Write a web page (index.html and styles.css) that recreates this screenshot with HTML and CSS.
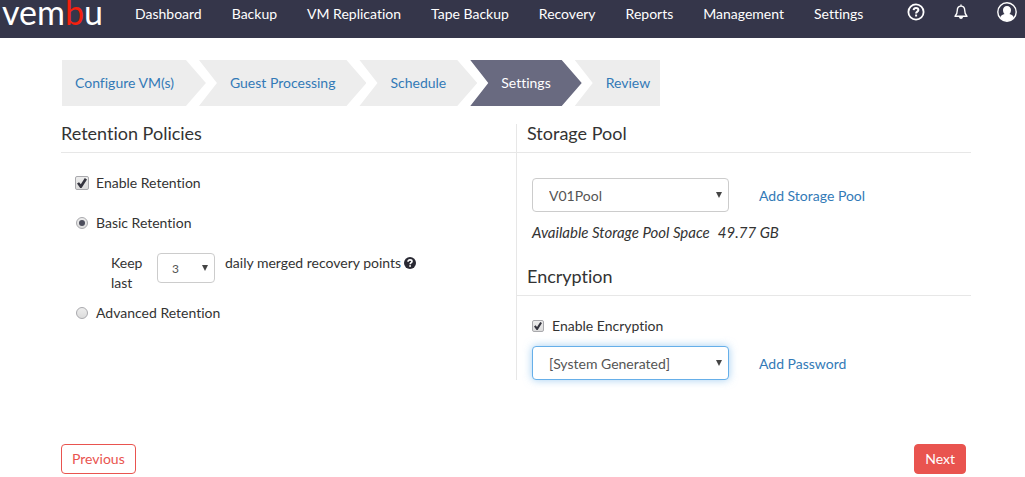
FILE: index.html
```html
<!DOCTYPE html>
<html lang="en">
<head>
  <meta charset="UTF-8" />
  <meta name="viewport" content="width=device-width, initial-scale=1" />
  <title>Vembu - Backup Settings</title>
  <link rel="stylesheet" href="styles.css">
</head>
<body>

<header class="topbar">
  <a href="#" class="logo">vem<span class="logo-accent">b</span>u</a>
  <nav class="main-nav">
    <a href="#">Dashboard</a>
    <a href="#">Backup</a>
    <a href="#">VM Replication</a>
    <a href="#">Tape Backup</a>
    <a href="#">Recovery</a>
    <a href="#">Reports</a>
    <a href="#">Management</a>
    <a href="#">Settings</a>
  </nav>
  <div class="top-icons">
    <a href="#" aria-label="Help">
      <svg width="18" height="18" viewBox="0 0 18 18" fill="none" stroke="#fff" stroke-width="1.8">
        <circle cx="9" cy="9" r="7.6"/>
        <path d="M6.6 7.2C6.8 5.6 7.8 5 9 5c1.400 0 2.400.8 2.400 2 0 1.600-2.300 1.700-2.300 3.500" stroke-width="2"/>
        <path d="M8.100 12.500h2" stroke-width="2"/>
      </svg>
    </a>
    <a href="#" aria-label="Notifications">
      <svg width="14" height="16" viewBox="0 0 14 16" fill="none" stroke="#fff" stroke-width="1.400" stroke-linejoin="round">
        <path d="M7 .5v1.500M1 12.300c1.800-1.500 2.300-3.300 2.300-6C3.300 3.700 4.800 2.100 7 2.100s3.700 1.600 3.700 4.200c0 2.700.5 4.500 2.300 6z"/>
        <path d="M5.300 13a1.700 1.700 0 0 0 3.400 0z" fill="#fff" stroke-width=".6"/>
      </svg>
    </a>
    <a href="#" aria-label="Account">
      <svg width="20" height="20" viewBox="0 0 20 20">
        <circle cx="10" cy="10" r="9.200" fill="none" stroke="#fff" stroke-width="1.400"/>
        <path d="M10 4c2.500 0 4 1.700 4 4 0 1.900-.7 3.300-1.700 4.100 2.400.4 4 1.500 4.500 3.700A9 9 0 0 1 10 19a9 9 0 0 1-6.800-3.200c.5-2.200 2.100-3.300 4.500-3.700C6.700 11.300 6 9.900 6 8c0-2.300 1.500-4 4-4z" fill="#fff"/>
      </svg>
    </a>
  </div>
</header>

<main class="container">
  <nav class="steps">
    <a href="#" class="step">Configure VM(s)</a>
    <a href="#" class="step">Guest Processing</a>
    <a href="#" class="step">Schedule</a>
    <a href="#" class="step active">Settings</a>
    <a href="#" class="step">Review</a>
  </nav>

  <form id="settingsForm">
    <div class="columns">
      <section class="column">
        <h2>Retention Policies</h2>
        <div class="retention">
          <label class="option"><input type="checkbox" class="check" name="retention" checked>Enable Retention</label>
          <label class="option"><input type="radio" class="radio" name="policy" value="basic" checked>Basic Retention</label>
          <div class="keep-row">
            <label for="keepLast" class="keep-label">Keep last</label>
            <span class="select-box small">
              <select id="keepLast">
                <option>1</option>
                <option>2</option>
                <option selected>3</option>
              </select>
            </span>
            <span class="keep-text">daily merged recovery points
              <svg class="hint" width="12" height="12" viewBox="0 0 12 12">
                <circle cx="6" cy="6" r="6" fill="#292933"/>
                <path d="M4 4.700C4.100 3.400 4.900 2.900 6 2.900s2 .6 2 1.600c0 1.200-1.800 1.300-1.800 2.700M5.200 9h1.800" fill="none" stroke="#fff" stroke-width="1.600"/>
              </svg>
            </span>
          </div>
          <label class="option"><input type="radio" class="radio" name="policy" value="advanced">Advanced Retention</label>
        </div>
      </section>

      <section class="column right">
        <h2>Storage Pool</h2>
        <div class="pool">
          <div class="field-row">
            <span class="select-box">
              <select id="pool" aria-label="Storage Pool">
                <option>V01Pool</option>
              </select>
            </span>
            <a href="#">Add Storage Pool</a>
          </div>
          <div class="space"><span>Available Storage Pool Space</span><span>49.77 GB</span></div>
        </div>

        <h2>Encryption</h2>
        <div class="encryption">
          <label class="option"><input type="checkbox" class="check compact" name="encryption" checked>Enable Encryption</label>
          <div class="field-row">
            <span class="select-box focused">
              <select id="password" aria-label="Encryption password">
                <option>[System Generated]</option>
              </select>
            </span>
            <a href="#">Add Password</a>
          </div>
        </div>
      </section>
    </div>

    <div class="actions">
      <button type="button" class="btn btn-outline">Previous</button>
      <button type="submit" class="btn">Next</button>
    </div>
  </form>
</main>

</body>
</html>
```
FILE: styles.css
```css
* {
  box-sizing: border-box;
}

body {
  margin: 0;
  background: #fff;
  color: #333;
  font-family: Lato, "Liberation Sans", sans-serif;
  font-size: 14px;
  line-height: 20px;
  font-variant-ligatures: none;
}

a {
  color: #337ab7;
  text-decoration: none;
}

/* top bar */
.topbar {
  display: flex;
  align-items: flex-start;
  height: 38px;
  padding: 0 8px 0 2px;
  background: #35364a;
}

.logo {
  width: 102px;
  color: #fff;
  font-size: 34px;
  line-height: 24px;
}

.logo-accent {
  color: #f5200f;
}

.main-nav {
  display: flex;
  gap: 30px;
  margin-left: 31px;
  padding-top: 4px;
  white-space: nowrap;
}

.main-nav a {
  color: #fff;
}

.top-icons {
  display: flex;
  align-items: center;
  gap: 29px;
  margin-left: auto;
  padding-top: 2px;
}

.top-icons svg {
  display: block;
}

/* wizard steps */
.container {
  padding: 22px 54px 0 61px;
}

.steps {
  display: flex;
}

.step {
  margin-left: -7px;
  padding: 13px 31px;
  background: #ededed;
  clip-path: polygon(0 0, calc(100% - 20px) 0, 100% 50%, calc(100% - 20px) 100%, 0 100%, 18px 50%);
}

.step:first-child {
  margin-left: 1px;
  padding-left: 13px;
  padding-right: 32px;
  clip-path: polygon(0 0, calc(100% - 20px) 0, 100% 50%, calc(100% - 20px) 100%, 0 100%);
}

.step:last-child {
  padding-right: 10px;
  clip-path: polygon(0 0, 100% 0, 100% 100%, 0 100%, 18px 50%);
}

.step.active {
  background: #696a80;
  color: #fff;
}

/* settings columns */
.columns {
  display: grid;
  grid-template-columns: 1fr 1fr;
  margin-top: 18px;
}

.column.right {
  border-left: 1px solid #e7e7e7;
}

h2 {
  margin: 0;
  padding-bottom: 10px;
  border-bottom: 1px solid #e7e7e7;
  font-size: 18px;
  font-weight: normal;
  line-height: 18px;
}

.right h2 {
  padding-left: 10px;
}

.retention {
  display: flex;
  flex-direction: column;
  align-items: flex-start;
  padding: 20px 0 0 14px;
}

.option {
  display: flex;
  align-items: center;
}

.retention .option + .option {
  margin-top: 20px;
}

.keep-row {
  display: flex;
  margin: 20px 0 10px 36px;
}

.keep-label {
  width: 46px;
  padding-right: 10px;
}

.keep-text {
  margin-left: 10px;
}

.hint {
  margin-left: -1px;
  vertical-align: -1px;
}

.check,
.radio {
  flex: none;
  display: grid;
  place-items: center;
  appearance: none;
  width: 14px;
  height: 14px;
  margin: 0 7px 0 0;
  border: 1px solid #a9a9ad;
  background: linear-gradient(#ededed, #dcdcdc);
}

.check {
  border-radius: 2px;
}

.check.compact {
  width: 12px;
  height: 12px;
  margin-right: 8px;
}

.check:checked::before {
  content: "";
  width: 10px;
  height: 10px;
  background: #35353f;
  clip-path: polygon(0 56%, 20% 42%, 38% 62%, 78% 0, 100% 14%, 46% 100%, 32% 100%);
}

.check.compact:checked::before {
  width: 8px;
  height: 8px;
}

.radio {
  width: 12px;
  height: 12px;
  margin: 0 8px 0 1px;
  border-radius: 50%;
}

.radio:checked::before {
  content: "";
  width: 6px;
  height: 6px;
  border-radius: 50%;
  background: #4c4d5c;
}

/* drop-downs */
.select-box {
  position: relative;
  width: 197px;
}

.select-box select {
  display: block;
  appearance: none;
  width: 100%;
  height: 34px;
  padding: 2px 24px 0 16px;
  border: 1px solid #ccc;
  border-radius: 4px;
  background: #fff;
  color: #555;
  font: inherit;
}

.select-box::after {
  content: "";
  position: absolute;
  top: 14px;
  right: 7px;
  width: 6px;
  height: 6px;
  background: #444;
  clip-path: polygon(0 0, 100% 0, 50% 100%);
  pointer-events: none;
}

.select-box.small {
  width: 58px;
}

.select-box.small select {
  height: 30px;
  padding-left: 14px;
  font-size: 12px;
}

.select-box.small::after {
  top: 12px;
}

.select-box.focused select {
  border-color: #66afe9;
  box-shadow: 0 0 8px rgba(102, 175, 233, 0.6);
}

.pool {
  padding: 25px 15px;
}

.field-row {
  display: flex;
  align-items: center;
  gap: 30px;
}

.field-row > a {
  padding-top: 2px;
}

.space {
  display: flex;
  gap: 8px;
  margin-top: 10px;
  font-size: 15px;
  font-style: italic;
}

.encryption {
  padding: 20px 15px 0;
}

.encryption .field-row {
  margin-top: 10px;
}

/* buttons */
.actions {
  display: flex;
  justify-content: space-between;
  margin-top: 64px;
  padding-right: 5px;
}

.btn {
  height: 30px;
  padding: 0 10px;
  border: 1px solid #e9544f;
  border-radius: 4px;
  background: #e9544f;
  color: #fff;
  font: inherit;
  cursor: pointer;
}

.btn-outline {
  background: #fff;
  color: #e9544f;
}
```
